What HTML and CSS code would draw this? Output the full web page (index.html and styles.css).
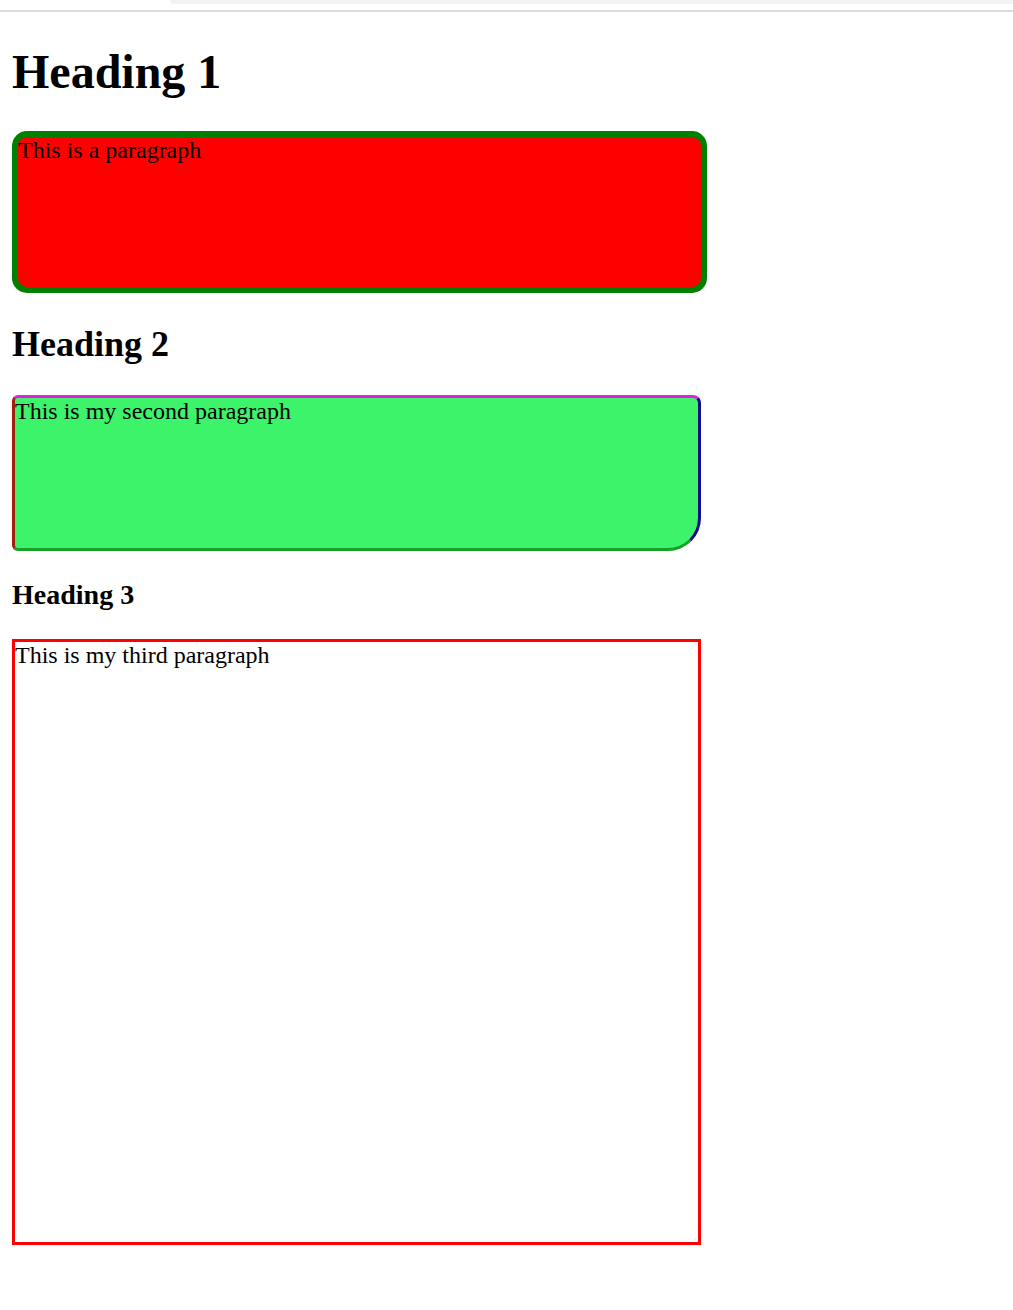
FILE: index.html
```html
<!DOCTYPE html>
<html>
<head>
<meta charset="utf-8">
<link rel="stylesheet" href="styles.css">
</head>
<body>
<div class="chrome"><div class="chrome-tab"></div></div>
<main class="page">
  <h1 class="h1">Heading 1</h1>
  <p class="box box-one">This is a paragraph</p>
  <h2 class="h2">Heading 2</h2>
  <p class="box box-two">This is my second paragraph</p>
  <h3 class="h3">Heading 3</h3>
  <p class="box box-three">This is my third paragraph</p>
</main>
</body>
</html>
```

FILE: styles.css
```css
html, body {
  margin: 0;
  padding: 0;
  background: #ffffff;
}
body {
  font-family: "Liberation Serif", "Times New Roman", serif;
  color: #000;
}
.chrome {
  height: 10px;
  border-bottom: 2px solid #dadce0;
  display: flex;
  justify-content: flex-end;
}
.chrome-tab {
  width: 843px;
  height: 4px;
  background: #f1f3f4;
  border-bottom-left-radius: 8px;
}
.page {
  padding: 0 12px;
  display: flow-root;
}
.h1 {
  font-size: 48px;
  font-weight: bold;
  margin: 32px 0;
}
.h2 {
  font-size: 36px;
  font-weight: bold;
  margin: 30px 0;
}
.h3 {
  font-size: 28px;
  font-weight: bold;
  margin: 28px 0;
}
.box {
  font-size: 24px;
  margin: 24px 0;
  width: 683px;
}
.box-one {
  height: 150px;
  background: #ff0000;
  border: 6px solid #008000;
  border-radius: 15px;
}
.box-two {
  height: 150px;
  background: #3cf36a;
  border-style: solid;
  border-width: 3px;
  border-top-color: #e41ee0;
  border-right-color: #1a0a8c;
  border-bottom-color: #18a02a;
  border-left-color: #a0200c;
  border-radius: 6px 8px 33px 6px;
}
.box-three {
  height: 600px;
  border: 3px solid #ff0000;
}
```
